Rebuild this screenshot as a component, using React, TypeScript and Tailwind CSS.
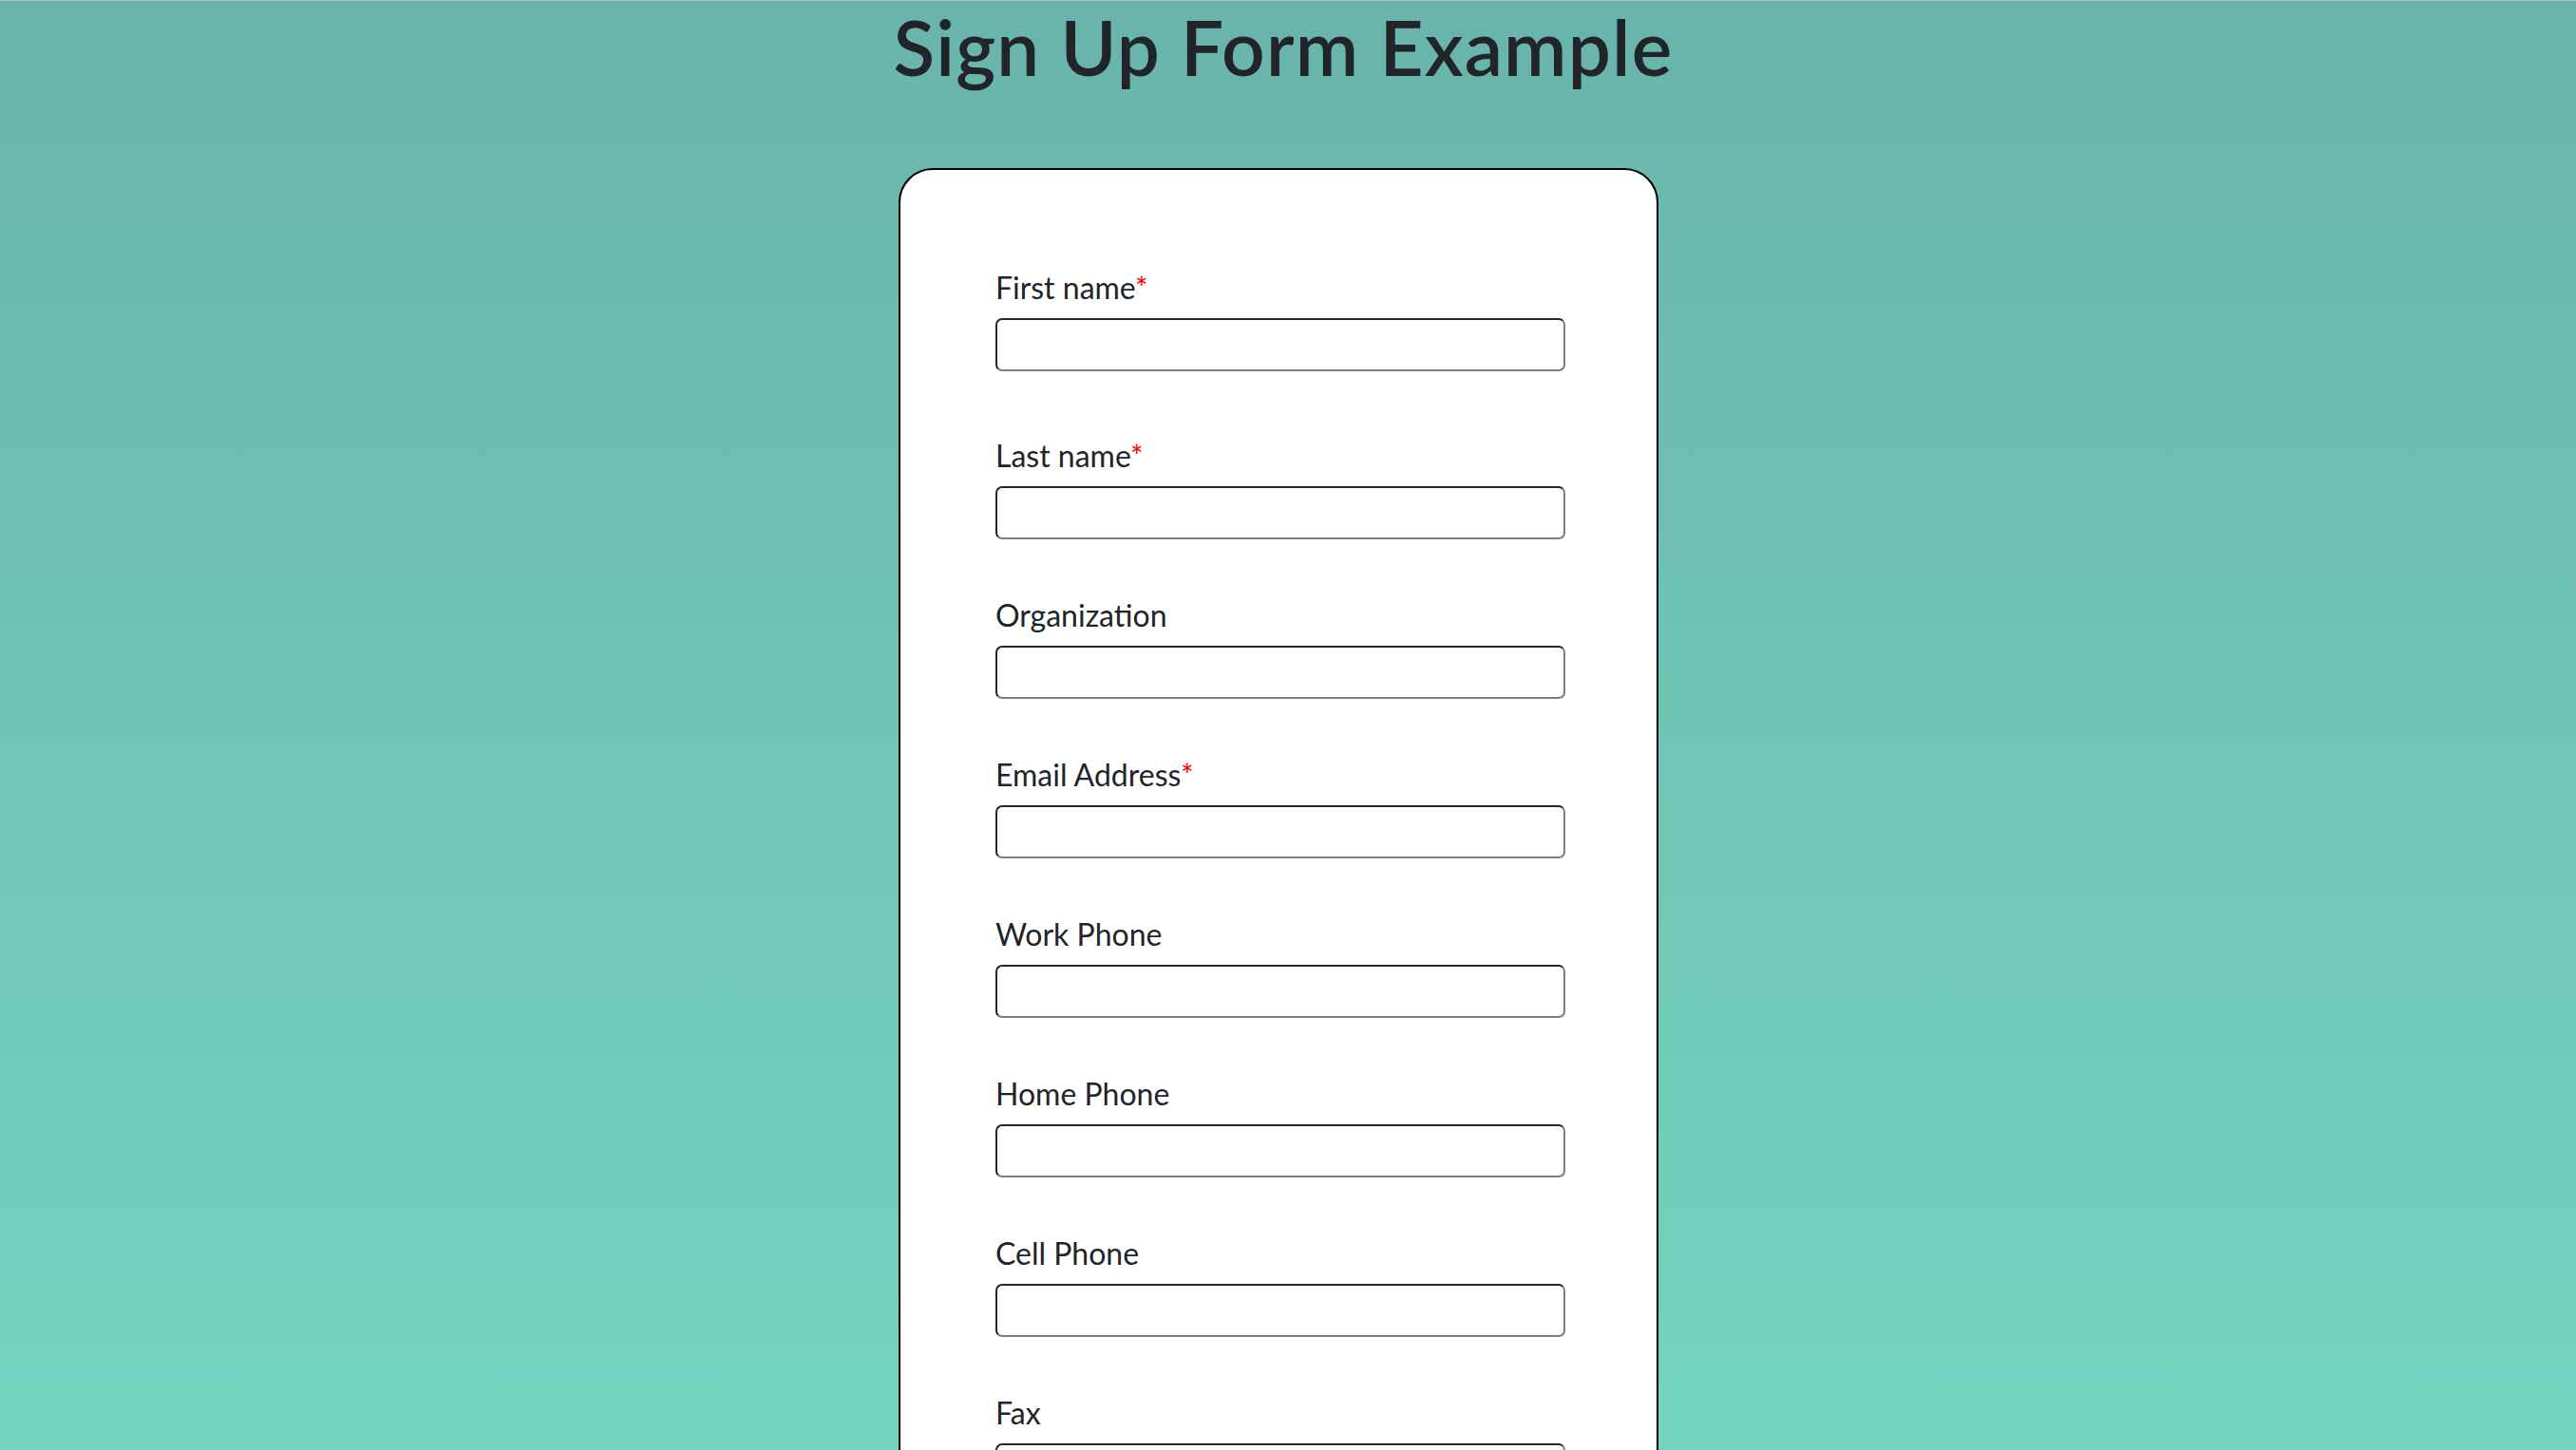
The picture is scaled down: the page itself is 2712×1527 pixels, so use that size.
const fields = [
  { label: "First name", required: true },
  { label: "Last name", required: true },
  { label: "Organization", required: false },
  { label: "Email Address", required: true },
  { label: "Work Phone", required: false },
  { label: "Home Phone", required: false },
  { label: "Cell Phone", required: false },
  { label: "Fax", required: false },
];

function Field({ label, required, first }: { label: string; required: boolean; first: boolean }) {
  return (
    <div className={first ? "flex flex-col mb-[65px]" : "flex flex-col mb-[56px]"}>
      <label className="text-[32px] leading-[48px]">
        {label}
        {required && <span className="text-[#ff0000]">*</span>}
      </label>
      <input
        type="text"
        className="mt-[8px] h-[56px] w-full bg-white border-2 border-solid border-t-[#262626] border-l-[#262626] border-r-[#7f7f7f] border-b-[#7f7f7f] rounded-[7px] px-[8px] text-[32px] outline-none"
      />
    </div>
  );
}

export default function App() {
  return (
    <div className="min-h-screen flex flex-col items-center pb-[120px] border-t border-[#bdbdbd] bg-[linear-gradient(180deg,#69b4ac_0px,#74d4c0_1527px)] font-['Lato',sans-serif] text-[#212529]">
      <h1 className="mr-[10px] text-[80px] leading-[96px] font-semibold tracking-[1.2px]">Sign Up Form Example</h1>
      <form className="mt-[80px] mr-[20px] w-[800px] bg-white border-2 border-black rounded-[36px] pt-[100px] pl-[100px] pr-[96px] pb-[100px] flex flex-col">
        {fields.map((f, i) => (
          <Field key={f.label} label={f.label} required={f.required} first={i === 0} />
        ))}
        <button
          type="submit"
          className="mt-[8px] h-[64px] w-[200px] rounded-[8px] bg-[#0d6efd] text-white text-[32px]"
        >
          Submit
        </button>
      </form>
    </div>
  );
}
